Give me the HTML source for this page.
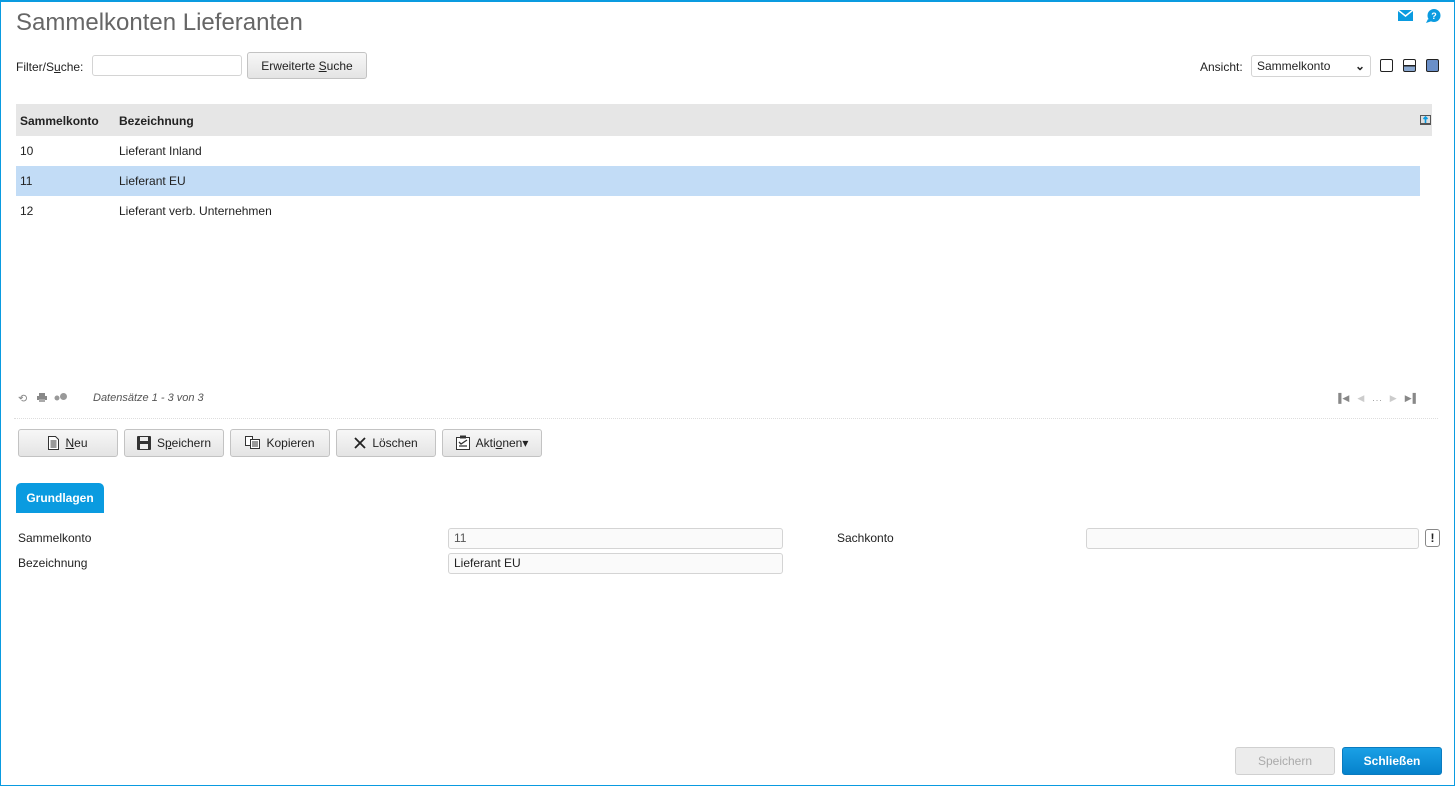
<!DOCTYPE html>
<html><head><meta charset="utf-8"><style>
*{box-sizing:border-box;margin:0;padding:0}
body{width:1455px;height:786px;overflow:hidden;background:#fff;font-family:"Liberation Sans",Arial,sans-serif;font-size:12px;color:#222;position:relative}
.frame{position:absolute;left:0;top:0;width:1455px;height:786px;border:1px solid #0a9be0;border-top-width:2px}
.a{position:absolute}
h1{position:absolute;left:16px;top:9px;font-weight:normal;font-size:24px;color:#666}
.inp{position:absolute;border:1px solid #d4d4d4;border-radius:3px;background:#fafafa}
.btn{position:absolute;border:1px solid #c3c3c3;border-radius:3px;background:linear-gradient(#f7f7f7,#e4e4e4);height:28px;line-height:26px;text-align:center;color:#222;font-size:12px}
.row{position:absolute;left:16px;width:1404px;height:30px;line-height:30px}
.row span{position:absolute}
.ico{display:inline-block;vertical-align:middle;margin-right:6px;margin-top:-2px}
.lbl{position:absolute;font-size:12px;color:#222}
</style></head><body>
<div class="frame"></div>
<h1>Sammelkonten Lieferanten</h1>
<svg class="a" style="left:1398px;top:10px" width="15" height="11" viewBox="0 0 15 11"><rect width="15" height="11" fill="#0a9be0"/><path d="M0 0 L7.5 6 L15 0" stroke="#fff" stroke-width="1.5" fill="none"/></svg>
<svg class="a" style="left:1426px;top:9px" width="15" height="14" viewBox="0 0 15 14"><circle cx="8" cy="6.5" r="6.5" fill="#0a9be0"/><path d="M2 10 L0 14 L6 12Z" fill="#0a9be0"/><text x="8" y="10" font-size="9" font-weight="bold" fill="#fff" text-anchor="middle" font-family="Liberation Sans">?</text></svg>

<div class="lbl" style="left:16px;top:60px">Filter/S<u>u</u>che:</div>
<div class="inp" style="left:92px;top:55px;width:150px;height:21px;background:#fff"></div>
<div class="btn" style="left:247px;top:52px;width:120px;height:27px">Erweiterte <u>S</u>uche</div>

<div class="lbl" style="left:1200px;top:60px">Ansicht:</div>
<div class="inp" style="left:1251px;top:55px;width:120px;height:22px;background:#fff;line-height:20px;padding-left:5px;font-size:12px">Sammelkonto<span style="position:absolute;right:5px;top:0;font-weight:bold">&#8964;</span></div>
<div class="a" style="left:1380px;top:59px;width:13px;height:13px;border:1.5px solid #222;border-radius:2px"></div>
<div class="a" style="left:1403px;top:59px;width:13px;height:13px;border:1.5px solid #222;border-radius:2px;background:linear-gradient(#fff 45%,#222 45%,#222 58%,#8aa8d0 58%)"></div>
<div class="a" style="left:1426px;top:59px;width:13px;height:13px;border:1.5px solid #222;border-radius:2px;background:#6a8fc8"></div>

<div class="a" style="left:16px;top:104px;width:1416px;height:32px;background:#e6e6e6"></div>
<div class="lbl" style="left:20px;top:114px;font-weight:bold">Sammelkonto</div>
<div class="lbl" style="left:119px;top:114px;font-weight:bold">Bezeichnung</div>
<svg class="a" style="left:1420px;top:115px" width="11" height="10"><rect width="11" height="10" fill="#555"/><rect x="1" y="1" width="9" height="7" fill="#ddd"/><path d="M5.5 2 L5.5 8 M3.5 4 L5.5 2 L7.5 4" stroke="#0a9be0" stroke-width="1.6" fill="none"/></svg>

<div class="row" style="top:136px"><span style="left:4px">10</span><span style="left:103px">Lieferant Inland</span></div>
<div class="row" style="top:166px;background:#c2dcf6"><span style="left:4px">11</span><span style="left:103px">Lieferant EU</span></div>
<div class="row" style="top:196px"><span style="left:4px">12</span><span style="left:103px">Lieferant verb. Unternehmen</span></div>

<div class="a" style="left:18px;top:392px;color:#888;font-size:11px">&#10226;</div>
<svg class="a" style="left:37px;top:393px" width="10" height="9"><rect x="2" y="0" width="6" height="3" fill="#888"/><rect x="0" y="3" width="10" height="4" fill="#888"/><rect x="2" y="6" width="6" height="3" fill="#aaa"/></svg>
<svg class="a" style="left:54px;top:392px" width="14" height="10"><circle cx="3" cy="6" r="2.5" fill="#999"/><circle cx="9.5" cy="4.5" r="3.5" fill="#999"/></svg>
<div class="lbl" style="left:93px;top:392px;font-style:italic;color:#555;font-size:11px">Datensätze 1 - 3 von 3</div>
<div class="lbl" style="left:1335px;top:393px;color:#888;font-size:9px;letter-spacing:1px">▐◀&nbsp;&nbsp;<span style="color:#ccc">◀</span>&nbsp;&nbsp;<span style="color:#999">...</span>&nbsp;&nbsp;<span style="color:#ccc">▶</span>&nbsp;&nbsp;▶▌</div>
<div class="a" style="left:14px;top:418px;width:1424px;border-top:1px dotted #ddd"></div>

<div class="btn" style="left:18px;top:429px;width:100px"><svg class="ico" width="11" height="14"><path d="M0.5 0.5H7.5L10.5 3.5V13.5H0.5Z" fill="#fff" stroke="#333"/><path d="M2.5 5H8.5M2.5 7H8.5M2.5 9H8.5M2.5 11H8.5" stroke="#333"/></svg><u>N</u>eu</div>
<div class="btn" style="left:124px;top:429px;width:100px"><svg class="ico" width="14" height="14"><rect width="14" height="14" rx="1" fill="#333"/><rect x="3" y="1" width="8" height="4" fill="#eee"/><rect x="3" y="8" width="8" height="5" fill="#eee"/></svg>S<u>p</u>eichern</div>
<div class="btn" style="left:230px;top:429px;width:100px"><svg class="ico" width="15" height="13"><path d="M0.5 0.5H7.5V9.5H0.5Z" fill="#fff" stroke="#333"/><path d="M5.5 3.5H14.5V12.5H5.5Z" fill="#fff" stroke="#333"/><path d="M7 6H13M7 8H13M7 10H13" stroke="#333"/></svg>Kopieren</div>
<div class="btn" style="left:336px;top:429px;width:100px"><svg class="ico" width="12" height="12"><path d="M1 1L11 11M11 1L1 11" stroke="#222" stroke-width="1.8"/></svg>Löschen</div>
<div class="btn" style="left:442px;top:429px;width:100px"><svg class="ico" width="14" height="15"><path d="M0.5 2.5H13.5V14.5H0.5Z" fill="#fff" stroke="#333"/><rect x="4" y="0.5" width="6" height="3" fill="#333"/><path d="M3 7L5 9L11 5M3 11H11" stroke="#333" stroke-width="1.3" fill="none"/></svg>Akti<u>o</u>nen▾</div>

<div class="a" style="left:16px;top:483px;width:88px;height:30px;background:#0a9be0;color:#fff;font-weight:bold;text-align:center;line-height:30px;border-radius:5px 5px 0 0">Grundlagen</div>

<div class="lbl" style="left:18px;top:531px">Sammelkonto</div>
<div class="inp" style="left:448px;top:528px;width:335px;height:21px;padding-left:5px;line-height:19px;color:#555">11</div>
<div class="lbl" style="left:18px;top:556px">Bezeichnung</div>
<div class="inp" style="left:448px;top:553px;width:335px;height:21px;padding-left:5px;line-height:19px">Lieferant EU</div>
<div class="lbl" style="left:837px;top:531px">Sachkonto</div>
<div class="inp" style="left:1086px;top:528px;width:333px;height:21px"></div>
<div class="a" style="left:1425px;top:529px;width:15px;height:18px;border:1px solid #888;border-radius:3px;text-align:center;font-weight:bold;line-height:16px">!</div>

<div class="btn" style="left:1235px;top:747px;width:100px;color:#aaa;border-color:#d0d0d0;background:#ececec">Speichern</div>
<div class="btn" style="left:1342px;top:747px;width:100px;color:#fff;font-weight:bold;border-color:#0a7bbf;background:linear-gradient(#1aa0e6,#0682cc)">Schließen</div>
</body></html>
